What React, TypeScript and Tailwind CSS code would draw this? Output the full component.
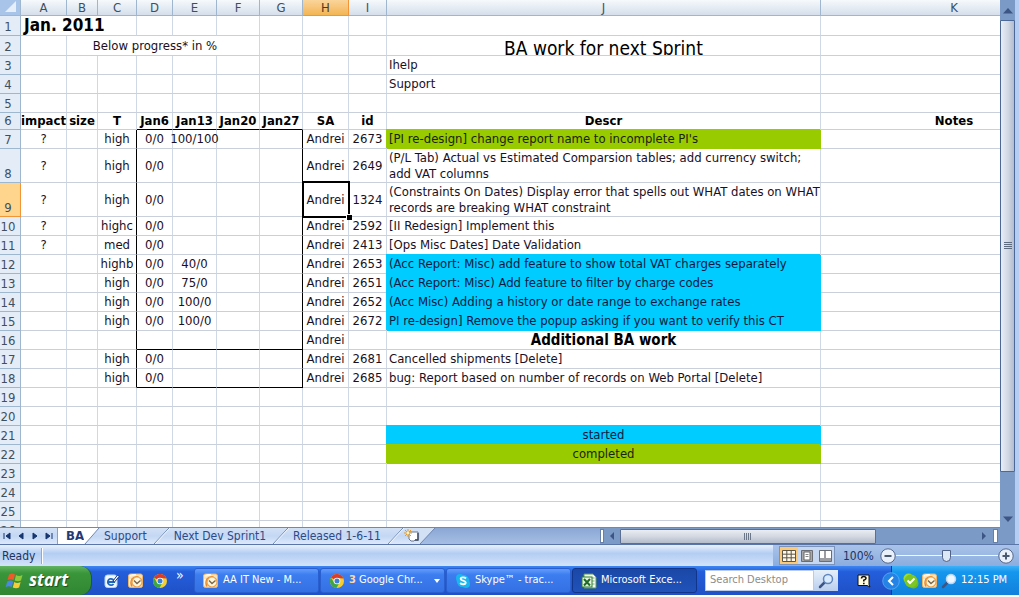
import React from "react";

type Fill = "started" | "completed";

interface Row {
  n: number;
  h?: string;
  impact?: string;
  t?: string;
  jan6?: string;
  jan13?: string;
  sa?: string;
  id?: string;
  descr?: string;
  fill?: Fill;
  align?: "left" | "center" | "heading";
}

const columns = [
  { name: "A", w: "w-[46px]" },
  { name: "B", w: "w-[31px]" },
  { name: "C", w: "w-[39px]" },
  { name: "D", w: "w-[36px]" },
  { name: "E", w: "w-[44px]" },
  { name: "F", w: "w-[43px]" },
  { name: "G", w: "w-[43px]" },
  { name: "H", w: "w-[46px]" },
  { name: "I", w: "w-[38px]" },
  { name: "J", w: "w-[434px]" },
  { name: "K", w: "w-[267px]" },
];

const rows: Row[] = [
  { n: 7, impact: "?", t: "high", jan6: "0/0", jan13: "100/100", sa: "Andrei", id: "2673", descr: "[PI re-design] change report name to incomplete PI's", fill: "completed" },
  { n: 8, h: "h-[34px]", impact: "?", t: "high", jan6: "0/0", sa: "Andrei", id: "2649", descr: "(P/L Tab) Actual vs Estimated Comparsion tables; add currency switch; add VAT columns" },
  { n: 9, h: "h-[34px]", impact: "?", t: "high", jan6: "0/0", sa: "Andrei", id: "1324", descr: "(Constraints On Dates) Display error that spells out WHAT dates on WHAT records are breaking WHAT constraint" },
  { n: 10, impact: "?", t: "highc", jan6: "0/0", sa: "Andrei", id: "2592", descr: "[II Redesign] Implement this" },
  { n: 11, impact: "?", t: "med", jan6: "0/0", sa: "Andrei", id: "2413", descr: "[Ops Misc Dates] Date Validation" },
  { n: 12, t: "highb", jan6: "0/0", jan13: "40/0", sa: "Andrei", id: "2653", descr: "(Acc Report: Misc) add feature to show total VAT charges separately", fill: "started" },
  { n: 13, t: "high", jan6: "0/0", jan13: "75/0", sa: "Andrei", id: "2651", descr: "(Acc Report: Misc) Add feature to filter by charge codes", fill: "started" },
  { n: 14, t: "high", jan6: "0/0", jan13: "100/0", sa: "Andrei", id: "2652", descr: "(Acc Misc) Adding a history or date range to exchange rates", fill: "started" },
  { n: 15, t: "high", jan6: "0/0", jan13: "100/0", sa: "Andrei", id: "2672", descr: "PI re-design] Remove the popup asking if you want to verify this CT", fill: "started" },
  { n: 16, sa: "Andrei", descr: "Additional BA work", align: "heading" },
  { n: 17, t: "high", jan6: "0/0", sa: "Andrei", id: "2681", descr: "Cancelled shipments [Delete]" },
  { n: 18, t: "high", jan6: "0/0", sa: "Andrei", id: "2685", descr: "bug: Report based on number of records on Web Portal [Delete]" },
  { n: 19 },
  { n: 20 },
  { n: 21, descr: "started", fill: "started", align: "center" },
  { n: 22, descr: "completed", fill: "completed", align: "center" },
  { n: 23 },
  { n: 24 },
  { n: 25 },
  { n: 26 },
];

const fills: Record<Fill, string> = {
  started: "bg-[#00ccff] border-[#00ccff] shadow-[-1px_-1px_0_#00ccff] text-[#0a1a44]",
  completed: "bg-[#99cc00] border-[#99cc00] shadow-[-1px_-1px_0_#99cc00] text-[#1a2408]",
};

const aligns = {
  left: "pl-0.5 text-left",
  center: "text-center",
  heading: "text-center text-[15px] font-bold text-black",
};

function Cell({
  children,
  className = "",
  right = "border-r-[#d0d7e5]",
  bottom = "border-b-[#c9cfdb]",
  span,
}: {
  children?: React.ReactNode;
  className?: string;
  right?: string;
  bottom?: string;
  span?: number;
}) {
  return (
    <td colSpan={span} className={`border-r border-b p-0 text-center ${right} ${bottom} ${className}`}>
      {children && <div className="flex justify-center">{children}</div>}
    </td>
  );
}

function RowHeader({ n, active = false }: { n: number; active?: boolean }) {
  return (
    <th
      scope="row"
      className={`border-r border-b p-0 pr-1 text-center align-bottom text-[13px] font-normal text-[#3f4f5f] ${
        active ? "border-[#f29536] bg-[#ffd58d]" : "border-[#9eb6ce] bg-[#e4ecf7]"
      }`}
    >
      <div className="flex justify-center">{n}</div>
    </th>
  );
}

function Blanks({ count }: { count: number }) {
  return (
    <>
      {Array.from({ length: count }, (_, i) => (
        <Cell key={i} />
      ))}
    </>
  );
}

function DataRow({ row }: { row: Row }) {
  const tracked = row.n <= 18;
  const edge = tracked ? "border-r-black" : undefined;
  const base = row.n === 16 || row.n === 18 ? "border-b-black" : undefined;
  return (
    <tr className={row.h ?? "h-[19px]"}>
      <RowHeader n={row.n} active={row.n === 9} />
      <Cell>{row.impact}</Cell>
      <Cell />
      <Cell right={edge}>{row.t}</Cell>
      <Cell bottom={base}>{row.jan6}</Cell>
      <Cell bottom={base}>{row.jan13}</Cell>
      <Cell bottom={base} />
      <Cell bottom={base} right={edge} />
      <Cell className={row.n === 9 ? "relative" : ""}>
        {row.sa}
        {row.n === 9 && (
          <span className="pointer-events-none absolute -top-0.5 -right-0.5 -bottom-0.5 -left-px border-2 border-black">
            <span className="absolute -right-1 -bottom-1 size-[6px] border-t border-l border-white bg-black" />
          </span>
        )}
      </Cell>
      <Cell>{row.id}</Cell>
      <td
        className={`overflow-hidden border-r border-b p-0 leading-4 whitespace-normal ${aligns[row.align ?? "left"]} ${
          row.fill ? fills[row.fill] : "border-r-[#d0d7e5] border-b-[#c9cfdb]"
        }`}
      >
        {row.descr}
      </td>
      <Cell />
    </tr>
  );
}

function Sheet() {
  return (
    <table className="w-[1088px] table-fixed border-separate border-spacing-0 text-[13px] leading-4 whitespace-nowrap text-[#1a0f24]">
      <colgroup>
        <col className="w-[21px]" />
        {columns.map((c) => (
          <col key={c.name} className={c.w} />
        ))}
      </colgroup>
      <thead>
        <tr className="h-4">
          <th className="border-r border-b border-[#9eb6ce] bg-[#a9c4e9] p-0">
            <svg viewBox="0 0 20 15" className="h-[15px] w-5">
              <path d="M16 1v11H5z" fill="#e6eefa" />
            </svg>
          </th>
          {columns.map((c) => (
            <th
              key={c.name}
              scope="col"
              className={`border-r border-b p-0 leading-[14px] font-normal ${
                c.name === "H"
                  ? "border-[#f29536] bg-linear-to-b from-[#fad59a] to-[#f2b551] text-[#4a3a20]"
                  : "border-[#9eb6ce] bg-linear-to-b from-[#f6f9fc] to-[#d5dfeb] text-[#3f4f5f]"
              }`}
            >
              {c.name}
            </th>
          ))}
        </tr>
      </thead>
      <tbody>
        <tr className="h-5">
          <RowHeader n={1} />
          <td colSpan={3} className="border-r border-b border-r-[#d0d7e5] border-b-[#c9cfdb] p-0 pl-[3px] text-[17px] leading-[19px] font-bold text-black">
            Jan. 2011
          </td>
          <Blanks count={8} />
        </tr>
        <tr className="h-5">
          <RowHeader n={2} />
          <Cell />
          <Cell span={5} className="pr-4">Below progress* in %</Cell>
          <Blanks count={3} />
          <Cell>
            <div className="h-[19px] overflow-hidden text-[19px] leading-6 text-black">BA work for next Sprint</div>
          </Cell>
          <Cell />
        </tr>
        {[3, 4, 5].map((n) => (
          <tr key={n} className="h-[19px]">
            <RowHeader n={n} />
            <Blanks count={9} />
            <td className="border-r border-b border-r-[#d0d7e5] border-b-[#c9cfdb] p-0 pl-0.5">
              {n === 3 ? "Ihelp" : n === 4 ? "Support" : null}
            </td>
            <Cell />
          </tr>
        ))}
        <tr className="h-[17px] font-bold text-black">
          <RowHeader n={6} />
          <Cell>impact</Cell>
          <Cell>size</Cell>
          <Cell>T</Cell>
          {["Jan6", "Jan13", "Jan20", "Jan27"].map((d) => (
            <Cell key={d} bottom="border-b-black">
              {d}
            </Cell>
          ))}
          <Cell>SA</Cell>
          <Cell>id</Cell>
          <Cell>Descr</Cell>
          <Cell>Notes</Cell>
        </tr>
        {rows.map((r) => (
          <DataRow key={r.n} row={r} />
        ))}
      </tbody>
    </table>
  );
}

function Slant({ last = false }: { last?: boolean }) {
  return (
    <svg viewBox="0 0 16 16" className="h-4 w-4 shrink-0">
      {last && <path d="M0 0h15L0 16z" fill="#d3e1f5" />}
      <path d="M0 16L15 0" stroke="#6d87b3" fill="none" />
      {!last && <path d="M1 16L16 0" stroke="#f4f8fd" fill="none" />}
    </svg>
  );
}

function SheetTabs() {
  const tab = "h-4 pr-[7px] pl-1 text-xs leading-4 text-[#2c4a8a] whitespace-nowrap";
  return (
    <div className="flex h-[17px] min-w-0 flex-3 overflow-hidden border-t border-[#6f89b5] bg-linear-to-b from-[#8ba7d4] to-[#a5bee4]">
      <div className="flex bg-linear-to-b from-[#d3e1f5] via-[#c3d7f4] to-[#dde9fa]">
        <div className="flex w-[58px] shrink-0 items-center border-r border-[#8ba0c4]">
          {[
            { l: "First sheet", d: "M1 1v6M7 1v6L3 4z" },
            { l: "Previous sheet", d: "M6 1v6L2 4z" },
            { l: "Next sheet", d: "M2 1v6l4-3z" },
            { l: "Last sheet", d: "M1 1v6l4-3zM7 1v6" },
          ].map((b) => (
            <button key={b.l} aria-label={b.l} className="flex w-[14px] shrink-0 justify-center">
              <svg viewBox="0 0 8 8" className="size-2">
                <path d={b.d} fill="#17356f" stroke="#17356f" />
              </svg>
            </button>
          ))}
        </div>
        <button className="h-4 bg-white pl-2 text-[13px] leading-4 font-bold text-[#1f3b7a]">BA</button>
        <svg viewBox="0 0 16 16" className="h-4 w-4 shrink-0">
          <path d="M0 0h15L4 13q-2 3-4 3z" fill="#fff" />
          <path d="M15 0L1 16" stroke="#6d87b3" fill="none" />
        </svg>
        <button className={tab}>Support</button>
        <Slant />
        <button className={tab}>Next Dev Sprint1</button>
        <Slant />
        <button className={tab}>Released 1-6-11</button>
        <Slant />
        <button aria-label="Insert worksheet" className="flex w-4 items-center justify-center">
          <svg viewBox="0 0 16 14" className="h-[14px] w-4">
            <path d="M5 3h9v8h-3l-1 1H7l-2-2z" fill="#fff" stroke="#6b7890" />
            <path d="M14 4v7h-3" stroke="#3f4a60" fill="none" strokeWidth="1.4" />
            <path d="M4 0v8M0 4h8M1 1l6 6M7 1L1 7" stroke="#e39a2c" />
            <circle cx="4" cy="4" r="1.4" fill="#fff2b0" />
          </svg>
        </button>
      </div>
      <Slant last />
    </div>
  );
}

function HScroll() {
  return (
    <div className="flex h-[17px] min-w-0 flex-2 items-center border-t border-[#6f89b5] bg-[#7c9ac6]">
      <span className="h-[14px] w-1 border border-[#6680aa] bg-white" />
      <button aria-label="Scroll left" className="flex w-4 justify-center">
        <svg viewBox="0 0 6 8" className="h-2 w-1.5"><path d="M5 0v8L1 4z" fill="#3c5584" /></svg>
      </button>
      <div className="flex-1">
        <div className="flex h-[15px] w-[72%] items-center justify-center gap-px rounded-[1px] border border-[#5c6f92] bg-linear-to-b from-[#e9edf3] via-[#d3d8e1] to-[#b4bccb]">
          {[0, 1, 2, 3].map((i) => (
            <span key={i} className="h-[7px] w-px bg-[#6b7789]" />
          ))}
        </div>
      </div>
      <button aria-label="Scroll right" className="flex w-[18px] justify-center">
        <svg viewBox="0 0 6 8" className="h-2 w-1.5"><path d="M1 0v8l4-4z" fill="#3c5584" /></svg>
      </button>
      <span className="mr-0.5 h-[14px] w-[5px] border border-[#6680aa] bg-white" />
    </div>
  );
}

function VScroll() {
  return (
    <div className="flex w-[15px] shrink-0 flex-col items-center bg-[#7c9ac6] pb-[17px]">
      <button aria-label="Scroll up" className="flex h-5 items-center pt-0.5">
        <svg viewBox="0 0 10 6" className="h-1.5 w-2.5"><path d="M0 5.5h10L5 0z" fill="#3c5584" /></svg>
      </button>
      <div className="flex w-full flex-1 flex-col">
        <div className="flex basis-[92%] flex-col items-center justify-center gap-px rounded-[1px] border border-[#4c6896] bg-linear-to-r from-[#e8eef7] via-[#d3dae7] to-[#b3bccd]">
          {[0, 1, 2, 3].map((i) => (
            <span key={i} className="h-px w-2 bg-[#5f6c80]" />
          ))}
        </div>
      </div>
      <button aria-label="Scroll down" className="flex h-4 items-center">
        <svg viewBox="0 0 10 6" className="h-1.5 w-2.5"><path d="M0 .5h10L5 6z" fill="#3c5584" /></svg>
      </button>
    </div>
  );
}

function ZoomButton({ label, d }: { label: string; d: string }) {
  return (
    <button aria-label={label} className="shrink-0">
      <svg viewBox="0 0 16 16" className="size-4">
        <circle cx="8" cy="8" r="7.200" fill="#e9f0fa" stroke="#56688c" />
        <path d={d} stroke="#4a5870" strokeWidth="2" />
      </svg>
    </button>
  );
}

function StatusBar() {
  return (
    <div className="flex h-[22px] shrink-0 items-center border-t border-[#5a76a8] bg-linear-to-b from-[#e3edfb] from-5% via-[#b3cdf3] via-40% to-[#d3e3fa] text-xs text-[#1c3360]">
      <span className="w-[41px] pl-0.5">Ready</span>
      <span className="h-4 w-0.5 border-l border-[#8fa9d3] bg-white" />
      <div className="ml-auto flex h-full items-center bg-linear-to-b from-[#a9c3ea] to-[#8badde] pl-1.5">
        <div className="flex h-[19px] w-[56px] border border-[#7b93bb] bg-[#c5d7f1]">
          <button aria-label="Normal view" className="flex flex-1 items-center justify-center bg-[#fbc977]">
            <svg viewBox="0 0 14 12" className="h-3 w-3.5">
              <path d="M.5.5h13v11H.5zM.5 4.2h13M.5 7.8h13M4.8 0v12M9.2 0v12" fill="#fff8e8" stroke="#5b5648" />
            </svg>
          </button>
          <button aria-label="Page layout view" className="flex flex-1 items-center justify-center">
            <svg viewBox="0 0 12 12" className="size-3">
              <path d="M.5.5h11v11H.5z" fill="#a8a8aa" stroke="#6a6d74" />
              <path d="M3 2h6v8H3z" fill="#fff" stroke="#666" />
              <path d="M4.5 4.5h3M4.5 6.5h3" stroke="#888" />
            </svg>
          </button>
          <button aria-label="Page break preview" className="flex flex-1 items-center justify-center">
            <svg viewBox="0 0 13 12" className="h-3 w-[13px]">
              <path d="M.5.5h12v11H.5z" fill="#9b9da2" stroke="#6a6d74" />
              <path d="M1 1h4v7H1zM7 1h5v7H7z" fill="#fff" />
            </svg>
          </button>
        </div>
        <span className="ml-2 w-[37px] whitespace-nowrap">100%</span>
        <ZoomButton label="Zoom out" d="M4.5 8h7" />
        <input
          type="range"
          aria-label="Zoom"
          defaultValue={49}
          className="h-4 w-[102px] appearance-none bg-transparent bg-[linear-gradient(#f2f7fd,#f2f7fd)] bg-[length:100%_1px] bg-center bg-no-repeat [&::-webkit-slider-thumb]:h-3 [&::-webkit-slider-thumb]:w-[9px] [&::-webkit-slider-thumb]:appearance-none [&::-webkit-slider-thumb]:rounded-b-full [&::-webkit-slider-thumb]:border [&::-webkit-slider-thumb]:border-[#4e6186] [&::-webkit-slider-thumb]:bg-[#dce7f5]"
        />
        <ZoomButton label="Zoom in" d="M4.5 8h7M8 4.5v7" />
        <span className="w-[5px]" />
      </div>
    </div>
  );
}

function OutlookIcon() {
  return (
    <svg viewBox="0 0 16 16" className="size-4 shrink-0">
      <rect x=".5" y="1" width="14" height="13.500" rx="2" fill="#fce3b8" stroke="#f0b469" />
      <path d="M2 3q3-1.500 6-1M2 6v6" stroke="#fffaf0" strokeWidth="1.500" fill="none" />
      <path d="M4 13.500q-2-4 0-7.500 2.500-3 6.500-2" stroke="#e58a2c" strokeWidth="1.500" fill="none" />
      <circle cx="9" cy="9" r="5" fill="#fff6dc" stroke="#eca04a" strokeWidth="1.200" />
      <path d="M6 7.500L9 10.500 12.500 7.500" stroke="#7a6548" strokeWidth="1.400" fill="none" />
    </svg>
  );
}

function ChromeIcon() {
  return (
    <svg viewBox="0 0 16 16" className="size-4 shrink-0">
      <circle cx="8" cy="8" r="7" fill="#f6cf2e" />
      <path d="M8 8L1.900 4.500A7 7 0 0 1 14.500 5.500L8 5z" fill="#dd3b2b" />
      <path d="M1.900 4.500A7 7 0 0 0 7.500 15l3-5.500L5 9.500z" fill="#3fa648" />
      <circle cx="8" cy="8" r="3.300" fill="#fff" />
      <circle cx="8" cy="8" r="2.500" fill="#3e7fd6" />
    </svg>
  );
}

function IeIcon() {
  return (
    <svg viewBox="0 0 16 16" className="size-4 shrink-0">
      <rect x="1" y="2" width="12" height="12.500" rx="2.500" fill="#f2f8ff" stroke="#b5d4f7" />
      <path d="M3.800 9h6.400A3.200 3.200 0 1 0 9.500 11" fill="none" stroke="#1f66bd" strokeWidth="1.800" />
      <path d="M9 8l4.500-6L15 3.500 10.500 9z" fill="#fff" stroke="#173a78" />
    </svg>
  );
}

function SkypeIcon() {
  return (
    <svg viewBox="0 0 16 16" className="size-4 shrink-0">
      <circle cx="5" cy="5" r="4" fill="#19b5ee" />
      <circle cx="11" cy="11" r="4" fill="#19b5ee" />
      <circle cx="8" cy="8" r="6.300" fill="#19b5ee" />
      <path d="M11 5.500C9.500 3.800 5.500 4 5.700 6c.2 2 5 1.400 5 3.500 0 2.200-4 2.200-5.500.5" stroke="#fff" strokeWidth="1.900" fill="none" />
    </svg>
  );
}

function ExcelIcon() {
  return (
    <svg viewBox="0 0 16 16" className="size-4 shrink-0">
      <path d="M3 1h9l3 3v11H3z" fill="#f3faf0" stroke="#5c9a55" />
      <path d="M10.500 5h3M10.500 8h3M10.500 11h3" stroke="#79b06f" />
      <rect x="1" y="4" width="10" height="10" fill="#e5f4df" stroke="#2f7d32" />
      <path d="M3 6l6 6.500M9 6l-6 6.500" stroke="#1f6b28" strokeWidth="2" />
    </svg>
  );
}

function LensIcon({ rim = "#5f86bd", glass = "#d8ebff" }: { rim?: string; glass?: string }) {
  return (
    <svg viewBox="0 0 16 16" className="size-4 shrink-0">
      <path d="M6.500 9.500L2 14" stroke="#3d5585" strokeWidth="2.500" strokeLinecap="round" />
      <circle cx="10" cy="6" r="4.500" fill={glass} stroke={rim} strokeWidth="1.500" />
    </svg>
  );
}

function TaskButton({ icon, children, pressed = false, menu = false }: { icon: React.ReactNode; children: React.ReactNode; pressed?: boolean; menu?: boolean }) {
  return (
    <button
      className={`flex h-[25px] w-[125px] shrink-0 items-center gap-1 rounded-[3px] border px-2 text-[11px] whitespace-nowrap text-white ${
        pressed
          ? "border-[#12358c] bg-linear-to-b from-[#1a48a8] to-[#2052b8]"
          : "border-[#2a5fd0] bg-linear-to-b from-[#5b97f8] from-5% via-[#3c7df0] via-25% to-[#3470e4]"
      }`}
    >
      {icon}
      <span>{children}</span>
      {menu && (
        <svg viewBox="0 0 6 4" className="-mr-1 ml-auto h-1 w-1.5">
          <path d="M0 0h6L3 4z" fill="#fff" />
        </svg>
      )}
    </button>
  );
}

function Taskbar() {
  return (
    <div className="flex h-[29px] shrink-0 items-center overflow-hidden bg-linear-to-b from-[#3f86f2] via-[#245edb] via-20% to-[#1f50c6]">
      <button className="flex h-full w-[92px] shrink-0 items-center gap-1 rounded-r-xl border-r border-[#1d5c22] bg-linear-to-b from-[#62b462] via-[#3a963a] via-25% to-[#318632] pl-[5px]">
        <svg viewBox="0 0 20 18" className="h-[18px] w-5">
          <path d="M4 2.500q3-2 6 0L8.500 8q-3-1.500-6 0z" fill="#ee5a2a" />
          <path d="M11 3q3 1.800 6.500 0L16 8.500q-3 1.500-6.300 0z" fill="#8fc93c" />
          <path d="M2.200 9.500q3-1.800 6 0L6.700 15q-3-1.500-6 0z" fill="#4c86e8" />
          <path d="M9.300 10q3 1.800 6.300 0l-1.500 5.500q-3 1.500-6.300 0z" fill="#f8cb3a" />
        </svg>
        <span className="pb-0.5 font-['Open_Sans',sans-serif] text-[17px] leading-5 font-bold text-white italic text-shadow-[1px_1px_1px_#1c4a1c]">start</span>
      </button>
      <div className="flex w-[102px] shrink-0 items-center gap-2 pl-3">
        <button aria-label="Internet Explorer"><IeIcon /></button>
        <button aria-label="Outlook"><OutlookIcon /></button>
        <button aria-label="Chrome"><ChromeIcon /></button>
        <button aria-label="More" className="pb-3 text-sm leading-4 text-white">»</button>
      </div>
      <div className="flex gap-px">
        <TaskButton icon={<OutlookIcon />}>AA IT New - M...</TaskButton>
        <TaskButton icon={<ChromeIcon />} menu>
          <b className="text-[#ffd9a0]">3</b> Google Chr...
        </TaskButton>
        <TaskButton icon={<SkypeIcon />}>Skype™ - trac...</TaskButton>
        <TaskButton icon={<ExcelIcon />} pressed>Microsoft Exce...</TaskButton>
      </div>
      <div className="flex h-[21px] min-w-0 flex-1 pl-2">
        <input
          aria-label="Search Desktop"
          placeholder="Search Desktop"
          className="w-[109px] border border-[#b9cbe8] bg-white pl-1 text-[11px] placeholder:text-[#8c8c8c]"
        />
        <button aria-label="Search" className="flex w-6 items-center justify-center bg-linear-to-b from-[#e6effa] to-[#b9cfee]">
          <LensIcon />
        </button>
      </div>
      <button aria-label="Help" className="mr-5 shrink-0">
        <svg viewBox="0 0 14 14" className="size-3.5">
          <path d="M1 1h11v9.500l1 2.500-3-1.500H1z" fill="#fffbe0" stroke="#111" />
          <path d="M4.500 4.500q0-2 2.200-2T9 4.300q0 1.200-2.200 2V7.500M6.800 8.700v1.500" stroke="#111" strokeWidth="1.600" fill="none" />
        </svg>
      </button>
      <div className="flex h-full w-[128px] shrink-0 items-center gap-[3px] border-l border-[#0a3ea0] bg-linear-to-b from-[#3bb2f7] via-[#1597ee] via-20% to-[#1180dc] text-[11px] text-white">
        <button aria-label="Show hidden icons" className="-ml-2.5">
          <svg viewBox="0 0 18 18" className="size-[18px]">
            <circle cx="9" cy="9" r="8.300" fill="#2583e6" stroke="#5eaef5" strokeWidth=".8" />
            <path d="M11 5L7 9l4 4" stroke="#fff" strokeWidth="2" fill="none" />
          </svg>
        </button>
        <svg viewBox="0 0 16 16" className="size-4 shrink-0">
          <circle cx="5.500" cy="5.500" r="5" fill="#9bdc35" />
          <circle cx="10.500" cy="10.500" r="5" fill="#6fbb1c" />
          <circle cx="8" cy="8" r="6.500" fill="#7dc623" />
          <path d="M4.500 7.500L7 10 11.500 5.500" stroke="#fff" strokeWidth="2" fill="none" />
        </svg>
        <OutlookIcon />
        <LensIcon rim="#bcd8f8" glass="#eef6ff" />
        <time className="pl-px whitespace-nowrap">12:15 PM</time>
      </div>
    </div>
  );
}

export default function App() {
  return (
    <div className="flex h-screen flex-col overflow-hidden bg-white pb-0.5 font-['DejaVu_Sans_Condensed','DejaVu_Sans',sans-serif]">
      <div className="flex min-h-0 flex-1">
        <div className="flex min-w-0 flex-1 flex-col">
          <div className="min-h-0 flex-1 overflow-hidden">
            <Sheet />
          </div>
          <div className="flex shrink-0">
            <SheetTabs />
            <HScroll />
          </div>
        </div>
        <VScroll />
        <div className="w-1 shrink-0 bg-[#b5cdf3]" />
      </div>
      <StatusBar />
      <Taskbar />
    </div>
  );
}
